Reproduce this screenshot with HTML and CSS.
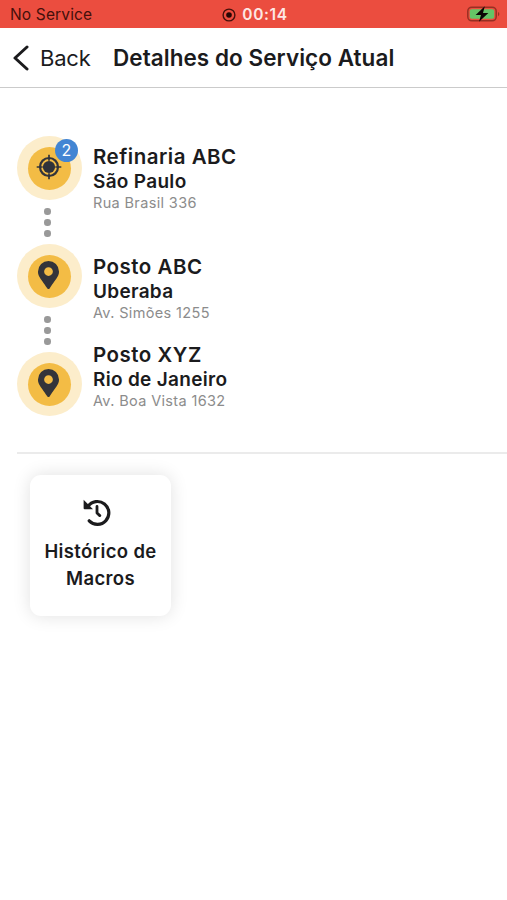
FILE: index.html
```html
<!DOCTYPE html>
<html lang="pt-BR">
<head>
  <meta charset="UTF-8" />
  <meta name="viewport" content="width=device-width, initial-scale=1.0" />
  <title>Detalhes do Serviço Atual</title>
  <link rel="stylesheet" href="styles.css">
</head>
<body>
  <div class="status-bar">
    <span class="carrier">No Service</span>
    <div class="recording">
      <svg width="14" height="14" viewBox="0 0 14 14">
        <circle cx="7" cy="7" r="5.9" fill="none" stroke="#45100b" stroke-width="1.4" />
        <circle cx="7" cy="7" r="2.8" fill="#250604" />
      </svg>
      <span class="clock">00:14</span>
    </div>
    <svg class="battery" width="33" height="18" viewBox="0 0 33 18">
      <rect x="0.8" y="1.2" width="28.4" height="13.6" rx="4" fill="none" stroke="#983023" stroke-width="1.5" />
      <rect x="2.8" y="3.2" width="24.4" height="9.6" rx="2" fill="#65c466" />
      <path d="M31 6v4.2c1.8-.6 1.8-3.6 0-4.2z" fill="#983023" />
      <path d="M17.8 .2L8.6 9h5.4l-2 6.8L21.4 7H16z" fill="#0c0605" />
    </svg>
  </div>

  <header class="nav-bar">
    <a class="back" href="#">
      <svg width="16" height="26" viewBox="0 0 16 26">
        <path d="M14 2L2 13L14 24" fill="none" stroke="#1b1b1d" stroke-width="3" stroke-linecap="round" stroke-linejoin="round" />
      </svg>
      <span>Back</span>
    </a>
    <h1>Detalhes do Serviço Atual</h1>
  </header>

  <main>
    <section class="route">
      <div class="track">
        <div class="marker">
          <div class="marker-inner">
            <svg width="26" height="26" viewBox="0 0 26 26">
              <circle cx="13" cy="13" r="9" fill="none" stroke="#33343a" stroke-width="2.2" />
              <circle cx="13" cy="13" r="6.1" fill="#2f323a" />
              <path d="M13 .7v6M13 19.3v6M.7 13h6M19.3 13h6" stroke="#33343a" stroke-width="1.7" />
            </svg>
          </div>
          <span class="badge">2</span>
        </div>
        <div class="dots"><i></i><i></i><i></i></div>
        <div class="marker">
          <div class="marker-inner">
            <svg class="pin" width="21" height="28" viewBox="0 0 384 512">
              <path fill="#33343a" d="M172 502C27 291 0 270 0 192a192 192 0 0 1 384 0c0 78-27 99-172 310a24 24 0 0 1-40 0zM192 272a80 80 0 1 0 0-160 80 80 0 0 0 0 160z" />
            </svg>
          </div>
        </div>
        <div class="dots"><i></i><i></i><i></i></div>
        <div class="marker">
          <div class="marker-inner">
            <svg class="pin" width="21" height="28" viewBox="0 0 384 512">
              <path fill="#33343a" d="M172 502C27 291 0 270 0 192a192 192 0 0 1 384 0c0 78-27 99-172 310a24 24 0 0 1-40 0zM192 272a80 80 0 1 0 0-160 80 80 0 0 0 0 160z" />
            </svg>
          </div>
        </div>
      </div>

      <div class="stops">
        <div class="stop">
          <h2>Refinaria ABC</h2>
          <h3>São Paulo</h3>
          <p>Rua Brasil 336</p>
        </div>
        <div class="stop">
          <h2>Posto ABC</h2>
          <h3>Uberaba</h3>
          <p>Av. Simões 1255</p>
        </div>
        <div class="stop">
          <h2>Posto XYZ</h2>
          <h3>Rio de Janeiro</h3>
          <p>Av. Boa Vista 1632</p>
        </div>
      </div>
    </section>

    <section class="actions">
      <a class="card" href="#">
        <svg width="28" height="28" viewBox="0 0 28 28">
          <path d="M5 7.5A11.4 11.4 0 1 1 6.2 21.8" fill="none" stroke="#1b1b1d" stroke-width="3.2" stroke-linecap="round" />
          <path d="M.6 .8l9.4 9.4H1.6a1 1 0 0 1-1-1z" fill="#1b1b1d" />
          <path d="M14 7.5v6.5l2.8 2.6" fill="none" stroke="#1b1b1d" stroke-width="2.8" stroke-linecap="round" stroke-linejoin="round" />
        </svg>
        <span>Histórico de Macros</span>
      </a>
    </section>
  </main>
</body>
</html>
```

FILE: styles.css
```css
* {
  box-sizing: border-box;
}
body {
  margin: 0;
  font-family: Inter, "Liberation Sans", sans-serif;
  background: #fff;
  color: #1b1b1d;
}
h1, h2, h3, p {
  margin: 0;
}
a {
  color: inherit;
  text-decoration: none;
}
svg {
  display: block;
}

/* status bar */
.status-bar {
  display: grid;
  grid-template-columns: 1fr auto 1fr;
  align-items: center;
  height: 28px;
  padding: 1px 7px 0 10px;
  background: #eb4d3f;
}
.carrier {
  font-size: 15.5px;
  letter-spacing: 0.15px;
  color: #45100b;
}
.recording {
  display: flex;
  align-items: center;
  gap: 6px;
}
.clock {
  font-size: 15.5px;
  font-weight: 600;
  letter-spacing: 0.6px;
  color: #fde7e4;
}
.battery {
  justify-self: end;
}

/* navigation */
.nav-bar {
  display: flex;
  align-items: center;
  height: 60px;
  padding-left: 13px;
  border-bottom: 1px solid #cbcbcb;
}
.back {
  display: flex;
  align-items: center;
  gap: 11px;
  width: 100px;
  font-size: 22px;
  letter-spacing: -0.2px;
}
h1 {
  font-size: 22.5px;
  font-weight: 600;
  letter-spacing: 0.05px;
}

/* route */
.route {
  display: flex;
  gap: 11px;
  height: 366px;
  margin-left: 17px;
  padding-top: 48px;
  border-bottom: 2px solid #ebebeb;
}
.track {
  width: 65px;
}
.marker {
  position: relative;
  display: flex;
  align-items: center;
  justify-content: center;
  width: 65px;
  height: 64px;
  border-radius: 50%;
  background: #fcedcb;
}
.marker-inner {
  display: flex;
  align-items: center;
  justify-content: center;
  width: 43px;
  height: 43px;
  padding: 0 2px 2px 0;
  border-radius: 50%;
  background: #f3bc45;
}
.badge {
  position: absolute;
  top: 3px;
  right: 4px;
  width: 23px;
  height: 23px;
  border-radius: 50%;
  background: #4285d3;
  color: #fff;
  font-size: 16px;
  line-height: 23px;
  text-align: center;
}
.dots {
  display: flex;
  flex-direction: column;
  align-items: center;
  gap: 4.5px;
  width: 61px;
  height: 44px;
  padding-top: 8px;
}
.dots i {
  width: 6.5px;
  height: 6.5px;
  border-radius: 50%;
  background: #999;
}
.stops {
  padding-top: 7px;
}
.stop {
  height: 110px;
}
.stop:nth-child(2) {
  height: 88px;
}
.stop h2 {
  font-size: 20.5px;
  font-weight: 600;
  line-height: 27px;
  letter-spacing: 0.5px;
}
.stop h3 {
  font-size: 19px;
  font-weight: 600;
  line-height: 23px;
  letter-spacing: 0.3px;
}
.stop p {
  font-size: 14.5px;
  line-height: 19px;
  letter-spacing: 0.35px;
  color: #8c8c8c;
}

/* actions */
.actions {
  padding: 21px 30px;
}
.card {
  display: flex;
  flex-direction: column;
  align-items: center;
  width: 141px;
  height: 141px;
  padding: 24px 10px 0;
  border-radius: 11px;
  background: #fff;
  box-shadow: 0 0 18px rgba(0,0,0,0.12);
}
.card svg {
  margin-right: 8px;
}
.card span {
  margin-top: 11px;
  font-size: 18.5px;
  font-weight: 600;
  line-height: 27px;
  letter-spacing: 0.35px;
  text-align: center;
}
```
